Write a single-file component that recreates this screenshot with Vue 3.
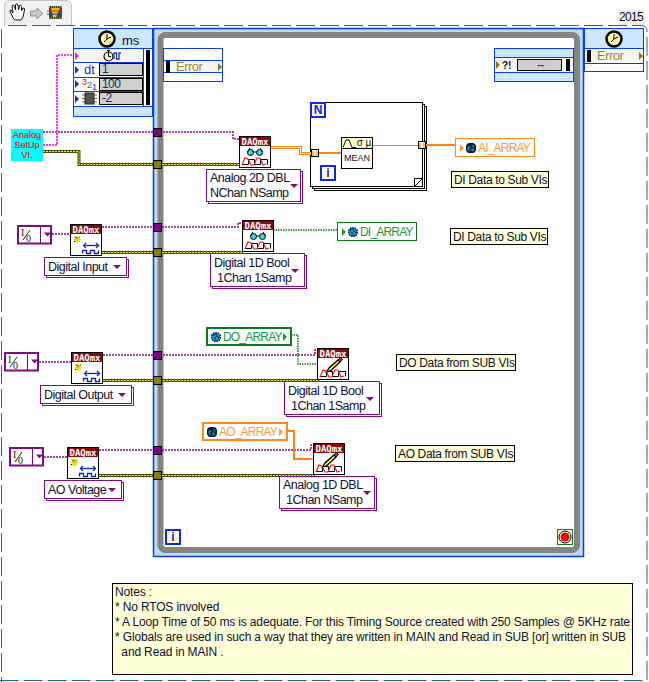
<script setup>
const wires = [
  { c: 'purple', d: 'M43 132H233V139H240' },
  { c: 'purple', d: 'M102 227H238V223H243' },
  { c: 'purple', d: 'M103 355H315V350H318' },
  { c: 'purple', d: 'M99 450H311V445H314' },
  { c: 'purple', d: 'M52 234H70' },
  { c: 'purple', d: 'M39 362H71' },
  { c: 'purple', d: 'M44 457H67' },
  { c: 'pink', d: 'M43 145H57V55H75' },
  { c: 'green', d: 'M273 230H337' },
  { c: 'green', d: 'M291 335H298V364H317' },
  { c: 'orange', d: 'M318 153H341' },
  { c: 'orange', d: 'M426 145H455' },
  { c: 'orange', d: 'M287 431H294V459H313' },
  { c: 'thin', d: 'M372 145.500H419' }
]
const errorWires = ['M43 151.500H79V164.500H240', 'M102 252.500H243', 'M103 380.500H320', 'M99 475.500H316']
const tunnels = [
  { y: 128, c: '#7a0a7a' }, { y: 160, c: '#808000' },
  { y: 223, c: '#7a0a7a' }, { y: 248, c: '#808000' },
  { y: 351, c: '#7a0a7a' }, { y: 376, c: '#808000' },
  { y: 446, c: '#7a0a7a' }, { y: 471, c: '#808000' }
]
const daq = [
  { x: 239, y: 136, kind: 'read' }, { x: 242, y: 220, kind: 'read' },
  { x: 317, y: 348, kind: 'write' }, { x: 313, y: 443, kind: 'write' },
  { x: 70, y: 224, kind: 'create' }, { x: 71, y: 352, kind: 'create' }, { x: 67, y: 447, kind: 'create' }
]
const constants = [{ x: 17, y: 225 }, { x: 4, y: 352 }, { x: 9, y: 447 }]
const selectors = [
  { x: 206, y: 169, w: 95, h: 33, lines: ['Analog 2D DBL', 'NChan NSamp'] },
  { x: 210, y: 253, w: 95, h: 34, lines: ['Digital 1D Bool', '\u00a01Chan 1Samp'] },
  { x: 284, y: 381, w: 96, h: 34, lines: ['Digital 1D Bool', '\u00a01Chan 1Samp'] },
  { x: 279, y: 476, w: 96, h: 33, lines: ['Analog 1D DBL', '\u00a01Chan NSamp'] },
  { x: 44, y: 257, w: 83, h: 19, lines: ['Digital Input'] },
  { x: 40, y: 385, w: 92, h: 19, lines: ['Digital Output'] },
  { x: 44, y: 480, w: 78, h: 19, lines: ['AO Voltage'] }
]
const globals = [
  { x: 455, y: 138, w: 80, text: 'AI_ARRAY', color: 'orange', dir: 'in' },
  { x: 337, y: 222, w: 80, text: 'DI_ARRAY', color: 'green', dir: 'in' },
  { x: 206, y: 327, w: 86, text: 'DO_ARRAY', color: 'green', dir: 'out', thick: true },
  { x: 202, y: 422, w: 86, text: 'AO_ARRAY', color: 'orange', dir: 'out', thick: true }
]
const labels = [
  { x: 451, y: 171, w: 98, text: 'DI Data to Sub VIs' },
  { x: 450, y: 228, w: 98, text: 'DI Data to Sub VIs' },
  { x: 396, y: 354, w: 120, text: 'DO Data from SUB VIs' },
  { x: 395, y: 445, w: 120, text: 'AO Data from SUB VIs' }
]
const rows = [
  { value: '1', icon: 'dt' },
  { value: '100', icon: 'count' },
  { value: '-2', icon: 'chip' }
]
const notes = [
  'Notes :',
  '* No RTOS involved',
  '* A Loop Time of 50 ms is adequate. For this Timing Source created with 250 Samples @ 5KHz rate',
  '* Globals are used in such a way that they are written in MAIN and Read in SUB [or] written in SUB',
  '\u00a0\u00a0and Read in MAIN .'
]
const at = (n) => ({ left: n.x + 'px', top: n.y + 'px', width: n.w ? n.w + 'px' : undefined, height: n.h ? n.h + 'px' : undefined })
const wave = 'M3 29L6 22L9 23L12 29L15 29L18 22L21 22L24 29L27 28'
</script>

<template>
  <div class="canvas">
    <svg class="layer" width="649" height="682" viewBox="0 0 649 682">
      <!-- tab and diagram frame -->
      <path d="M4.5 25.5V6Q4.5 .5 10 .5H65Q71.5 .5 71.5 6V25.5" fill="#f0f0f0" stroke="#c4c4d0" />
      <rect x="617" y="10" width="28" height="15" fill="#efefef" />
      <path class="frame" d="M8 25.5H641Q647 25.5 647 31V680.5H0" />
      <path class="frame" d="M1.5 29V682" />

      <!-- hand / arrow / VI icons -->
      <path d="M13 18L10 11Q10 9 12 11L13 13L12 6Q13 4 14.5 6L15.5 10L15.5 4.5Q17 3 18 5L18.5 10L19.5 5.500Q21 4.500 21.500 6.500L21.500 11L23 8Q25 8 24.500 10L23 17L21 20H15Z" fill="#fff" stroke="#111" stroke-width="1" />
      <path d="M30.500 11H37V8L43 13.500L37 19V16H30.500Z" fill="#c8c8c8" stroke="#909090" />
      <rect x="49" y="6" width="13" height="13" fill="#444" />
      <path d="M49 7h13M49 18h13" stroke="#bbb" stroke-dasharray="1 1" />
      <path d="M51 8H60L56 17H53Z" fill="#e8c800" />
      <path d="M47 11H62" stroke="#e02020" />
      <path d="M47 14H62" stroke="#2040e0" />

      <!-- while loop -->
      <rect x="153.500" y="28.500" width="430" height="528" fill="#bcdcf4" stroke="#0a3ce8" stroke-width="1.500" />
      <rect x="160.500" y="35" width="416.500" height="515" rx="5" fill="#fff" stroke="#848484" stroke-width="6" />

      <!-- for loop -->
      <rect x="314.500" y="106.500" width="112" height="84" fill="#fff" stroke="#000" />
      <rect x="312.500" y="104.500" width="112" height="84" fill="#fff" stroke="#000" />
      <rect x="310.500" y="102.500" width="112" height="84" fill="#fff" stroke="#000" />
      <path d="M414.500 186.500L422.500 178.500H414.500Z" fill="#fff" stroke="#000" />

      <!-- wires -->
      <path v-for="(w, i) in errorWires" :key="'eb' + i" class="err-base" :d="w" />
      <path v-for="(w, i) in errorWires" :key="'et' + i" class="err-top" :d="w" />
      <path v-for="w in wires" :key="w.d" :class="w.c" :d="w.d" />
      <path class="double-o" d="M271 147.500H300.500V153.500H311" />
      <path class="double-i" d="M271 147.500H300.500V153.500H311" />

      <!-- loop tunnels -->
      <rect v-for="t in tunnels" :key="t.y" x="153.500" :y="t.y + 0.5" width="8" height="8" :fill="t.c" stroke="#000" />
      <g class="tunnel">
        <rect x="311.500" y="149.500" width="7" height="7" />
        <path d="M313.500 151.500h-.5v4h.5M316.500 151.500h.5v4h-.5" />
        <rect x="418.500" y="141.500" width="7" height="7" />
        <path d="M420.500 143.500h-.5v4h.5M423.500 143.500h.5v4h-.5" />
      </g>

      <!-- stop terminal -->
      <rect x="557.500" y="529.500" width="15" height="15" fill="#ffffd8" stroke="#0a7a1a" />
      <circle cx="565" cy="537" r="6" fill="#fff" stroke="#000" />
      <circle cx="565" cy="537" r="4.500" fill="#f00000" />

      <!-- DAQmx nodes -->
      <g v-for="n in daq" :key="n.x + '-' + n.y" :transform="`translate(${n.x} ${n.y})`">
        <rect x=".5" y=".5" width="31" height="31" fill="#fff" stroke="#000" />
        <rect x="1" y="1" width="30" height="9" fill="#8c0a0a" />
        <text class="daq-title" x="16" y="8.500" text-anchor="middle" textLength="27">DAQmx</text>
        <g v-if="n.kind === 'read'">
          <circle cx="11.500" cy="16.500" r="3" fill="#40d0e0" stroke="#000" />
          <circle cx="20.500" cy="16.500" r="3" fill="#40d0e0" stroke="#000" />
          <path d="M14 16h4M8.500 16L11 12M23.500 16L21 12" fill="none" stroke="#000" />
        </g>
        <g v-if="n.kind === 'write'">
          <path d="M12 20L9.500 24L14 22.500L23 14L21 12Z" fill="#f4e870" stroke="#000" stroke-width="1.300" />
          <path d="M21 12L23 14L25.500 11.500L23.500 9.500Z" fill="#e02020" stroke="#000" />
        </g>
        <g v-if="n.kind !== 'create'">
          <path d="M3 28.500H9.500V23.500H15.500V28.500H21.500V23.500H28.500V28.500" fill="none" stroke="#000" />
          <path :d="wave" fill="none" stroke="#e81010" stroke-width="1.100" />
        </g>
        <g v-else>
          <path d="M4 15.500H11M7.500 12V19M5 13L10 18M10 13L5 18" stroke="#e8d800" stroke-width="1.500" />
          <path d="M5 12.500L7 14.500M10 12.500L9 13.500M4 18L5 17" stroke="#000" />
          <path d="M14 21.500H28" stroke="#0a2aa8" stroke-width="1.300" />
          <path d="M16 19L13.500 21.500L16 24M26 19L28.500 21.500L26 24" fill="none" stroke="#0a2aa8" stroke-width="1.300" />
          <path d="M12.500 29.500V26.500H16.500V29.500H20.500V26.500H24.500V29.500H28.500V26.500" fill="none" stroke="#0a2aa8" stroke-width="1.300" />
        </g>
      </g>

      <!-- ring constants -->
      <g v-for="c in constants" :key="c.x" :transform="`translate(${c.x} ${c.y})`">
        <rect x="1" y="1" width="33" height="17.500" fill="#fff" stroke="#800a80" stroke-width="2" />
        <path d="M23.500 1V18" stroke="#800a80" />
        <path d="M27 7.500H34L30.500 11.500Z" fill="#800a80" />
        <path d="M6 15L13 5" stroke="#222" />
        <text class="io" x="4" y="11">I</text>
        <text class="io" x="9" y="17">0</text>
      </g>

      <!-- chevrons -->
      <g class="chev">
        <path d="M109 109.500L113.500 113L118 109.500M109 112.500L113.500 116L118 112.500" />
        <path d="M189 73.500L193.500 77L198 73.500M189 76.500L193.500 80L198 76.500" />
        <path d="M530 73.500L534.500 77L539 73.500M530 76.500L534.500 80L539 76.500" />
        <path d="M610 63.500L614.500 67L619 63.500M610 66.500L614.500 70L619 66.500" />
      </g>
    </svg>

    <div class="tag year">2015</div>

    <!-- timed loop left node -->
    <div class="timed">
      <div class="timed-head">
        <svg width="18" height="18" viewBox="0 0 18 18"><circle cx="9" cy="9" r="7.500" fill="#fff3b0" stroke="#000" stroke-width="2.500" /><path d="M9 4V9L6 12M13 7L9 9" stroke="#000" fill="none" /></svg>
        <span class="ms">ms</span>
      </div>
      <div class="timed-body">
        <div class="timed-rows">
          <div class="row row-top">
            <i class="tri magenta"></i>
            <svg class="watch" width="18" height="12" viewBox="0 0 18 12"><circle cx="5.500" cy="6.500" r="4.500" fill="#fff3b0" stroke="#000" stroke-width="1.200" /><path d="M4 .5H7M5.500 1V6.500H8" fill="none" stroke="#000" /><path d="M11 9V3H13.500V9H16V3H18" fill="none" stroke="#1a3ab0" stroke-width="1.300" /></svg>
          </div>
          <div v-for="r in rows" :key="r.icon" class="row">
            <i class="tri blue"></i>
            <span class="row-icon">
              <span v-if="r.icon === 'dt'" class="dt">dt</span>
              <span v-if="r.icon === 'count'" class="count"><b class="c3">3</b><b class="c2">2</b><b class="c1">1</b></span>
              <svg v-if="r.icon === 'chip'" width="15" height="13" viewBox="0 0 15 13"><path d="M0 3H15M0 6.500H15M0 10H15" stroke="#807020" /><rect x="3" y="1" width="9" height="11" fill="#555" stroke="#222" /></svg>
            </span>
            <span class="num">{{ r.value }}</span>
          </div>
        </div>
        <div class="rail"><i class="bar"></i></div>
      </div>
      <div class="timed-foot"></div>
    </div>

    <!-- left error node -->
    <div class="err-node left-err">
      <div class="band white"></div>
      <div class="err-row">
        <i class="bar short"></i>
        <span class="err-text">Error</span>
        <i class="tri olive"></i>
      </div>
      <div class="band white last"></div>
    </div>

    <!-- right inner node -->
    <div class="err-node right-err">
      <div class="band"></div>
      <div class="err-row">
        <i class="tri olive"></i>
        <span class="bang">?!</span>
        <span class="num dash">--</span>
        <i class="bar short"></i>
      </div>
      <div class="band last"></div>
    </div>

    <!-- far right node -->
    <div class="end-node">
      <div class="end-head">
        <svg width="18" height="18" viewBox="0 0 18 18"><circle cx="9" cy="9" r="7.500" fill="#fff3b0" stroke="#000" stroke-width="2.500" /><path d="M9 4V9L6 12M13 7L9 9" stroke="#000" fill="none" /></svg>
      </div>
      <div class="err-row end-row">
        <i class="bar short"></i>
        <span class="err-text">Error</span>
        <i class="tri olive"></i>
      </div>
      <div class="end-foot"></div>
    </div>

    <div class="setup"><span>Analog</span><span>SetUp</span><span>VI.</span></div>

    <div class="iter iter-n">N</div>
    <div class="iter iter-i">i</div>
    <div class="iter iter-w">i</div>

    <div class="mean">
      <div class="mean-top">
        <svg width="13" height="9" viewBox="0 0 13 9"><path d="M0 8.500L3 1L6 1L9 8.500H13" fill="none" stroke="#000" /></svg>
        <span>σ µ</span>
      </div>
      <div class="mean-bottom">MEAN</div>
    </div>

    <div v-for="s in selectors" :key="s.x" class="selector" :style="at(s)">
      <div class="sel-lines"><div v-for="l in s.lines" :key="l">{{ l }}</div></div>
      <i class="tri purple"></i>
    </div>

    <div v-for="g in globals" :key="g.text" class="global" :class="[g.color, { thick: g.thick, out: g.dir === 'out' }]" :style="at(g)">
      <i v-if="g.dir === 'in'" class="g-tri"></i>
      <svg width="10" height="10" viewBox="0 0 10 10"><circle cx="5" cy="5" r="4.500" fill="#08a0d8" stroke="#102030" /><path d="M2 3L5 2L6 4L4 6L5 9M7 5L9 6" fill="none" stroke="#102030" /></svg>
      <span>{{ g.text }}</span>
      <i v-if="g.dir === 'out'" class="g-tri"></i>
    </div>

    <div v-for="l in labels" :key="l.x" class="tag note-label" :style="at(l)">{{ l.text }}</div>

    <div class="notes"><div v-for="n in notes" :key="n">{{ n }}</div></div>
  </div>
</template>

<style>
html, body { margin: 0; background: #fff; }
</style>

<style scoped>
.canvas { position: relative; width: 649px; height: 682px; overflow: hidden; background: #fff; font-family: "Liberation Sans", Arial, sans-serif; font-size: 12px; color: #101030; }
.layer { position: absolute; left: 0; top: 0; }
.frame { fill: none; stroke: #1668a8; stroke-width: 1; stroke-dasharray: 19 5; }
.purple { fill: none; stroke: #800a80; stroke-width: 1.500; stroke-dasharray: 2 1; }
.pink { fill: none; stroke: #ff30ff; stroke-width: 2; stroke-dasharray: 2 1; }
.green { fill: none; stroke: #0a7a1a; stroke-width: 1.500; stroke-dasharray: 1.500 1; }
.orange { fill: none; stroke: #ff7f10; stroke-width: 2; }
.thin { fill: none; stroke: #e88a30; stroke-width: 1; }
.double-o { fill: none; stroke: #ff7f10; stroke-width: 3; }
.double-i { fill: none; stroke: #fff; stroke-width: 1; }
.err-base { fill: none; stroke: #4a4a00; stroke-width: 3; }
.err-top { fill: none; stroke: #f4f020; stroke-width: 1; stroke-dasharray: 2 1; }
.tunnel rect { fill: #ffffcc; stroke: #000; }
.tunnel path { fill: none; stroke: #e07000; }
.chev path { fill: none; stroke: #b0b0b0; }
.daq-title { font-family: "DejaVu Sans Mono", monospace; font-size: 9px; font-weight: 700; fill: #fff; }
.io { font-family: "Liberation Serif", serif; font-size: 10px; fill: #222; }

.tag { position: absolute; white-space: nowrap; }
.year { left: 619px; top: 10px; font-size: 12px; letter-spacing: -0.7px; line-height: 14px; color: #111; }

.timed { position: absolute; left: 73px; top: 28px; width: 80px; height: 89px; box-sizing: border-box; border: 1px solid #0a3ce8; background: #cce6fb; display: flex; flex-direction: column; }
.timed-head { height: 19px; display: flex; align-items: center; justify-content: flex-start; padding-left: 24px; gap: 6px; }
.ms { font-size: 13px; margin-top: 3px; }
.timed-body { display: flex; height: 59px; border-top: 1px solid #0a3ce8; border-bottom: 1px solid #0a3ce8; box-sizing: border-box; }
.timed-rows { width: 69px; display: flex; flex-direction: column; }
.row { height: 15px; box-sizing: border-box; border-bottom: 1px solid #0a3ce8; background: #fff; display: flex; align-items: center; padding-left: 1px; position: relative; }
.row:last-child { border-bottom: 0; }
.row-top { background: #f6f6f6; justify-content: center; }
.row-top .tri { position: absolute; left: 1px; top: 3px; }
.watch { margin-left: 6px; }
.row-icon { width: 19px; display: flex; justify-content: center; margin-left: 1px; }
.dt { color: #0a30d0; font-size: 13px; line-height: 13px; }
.count { display: flex; font-size: 9px; line-height: 9px; height: 13px; }
.count b { font-weight: 400; }
.c3 { color: #e01010; }
.c2 { color: #108030; margin-top: 3px; }
.c1 { color: #1030d0; margin-top: 5px; }
.num { flex: 1; height: 13px; box-sizing: border-box; border: 1px solid #000; background: #cfcfcf; font-size: 12px; letter-spacing: -0.6px; line-height: 11px; padding-left: 2px; color: #203050; }
.rail { flex: 1; border-left: 1px solid #0a3ce8; background: #fff; display: flex; justify-content: center; padding-top: 1px; }
.bar { display: block; width: 4px; height: 55px; background: #000; }
.bar.short { height: 12px; flex: none; }

.tri { display: block; width: 0; height: 0; flex: none; }
.tri.magenta { border-left: 4px solid #f020f0; border-top: 4px solid transparent; border-bottom: 4px solid transparent; }
.tri.blue { border-left: 4px solid #0a30d0; border-top: 4px solid transparent; border-bottom: 4px solid transparent; }
.tri.olive { border-left: 4px solid #8a7a10; border-top: 4px solid transparent; border-bottom: 4px solid transparent; }
.tri.purple { border-top: 4px solid #800a80; border-left: 4px solid transparent; border-right: 4px solid transparent; }

.err-node { position: absolute; top: 48px; height: 34px; width: 80px; box-sizing: border-box; border: 1px solid #0a3ce8; display: flex; flex-direction: column; }
.left-err { left: 163px; width: 60px; }
.right-err { left: 494px; }
.left-err .band { flex: none; height: 11px; }
.right-err .band { flex: none; height: 8px; }
.band { background: #cce6fb; }
.band.last { flex: 1; height: auto; }
.band.white { background: #fff; }
.err-row { height: 13px; flex: none; box-sizing: border-box; background: #f6f6f6; border-top: 1px solid #0a3ce8; border-bottom: 1px solid #0a3ce8; display: flex; align-items: center; padding: 0 0 0 2px; }
.left-err .err-row { height: 13px; }
.right-err .err-row { height: 16px; padding: 0 3px 0 1px; }
.err-text { flex: 1; color: #a08a20; font-size: 13px; letter-spacing: -0.5px; line-height: 12px; padding-left: 6px; }
.right-err .num { flex: none; width: 45px; height: 12px; margin: 0 4px 0 9px; text-align: center; line-height: 10px; }
.bang { font-size: 10px; font-weight: 700; color: #111; margin-left: 2px; width: 6px; }

.end-node { position: absolute; left: 584px; top: 28px; width: 60px; height: 44px; box-sizing: border-box; border: 1px solid #0a3ce8; background: #fff; display: flex; flex-direction: column; }
.end-head { height: 19px; background: #cce6fb; display: flex; align-items: center; justify-content: center; flex: none; }
.end-row { height: 16px; }
.end-foot { flex: 1; }

.setup { position: absolute; left: 11px; top: 129px; width: 32px; height: 32px; background: #00ffff; color: #f80808; font-size: 9px; line-height: 10px; display: flex; flex-direction: column; align-items: center; padding-top: 1px; box-sizing: border-box; -webkit-text-stroke: 0.2px #f80808; }

.iter { position: absolute; box-sizing: border-box; width: 16px; height: 16px; border: 2px solid #0a2ae8; background: #ffffd0; color: #0a2ae8; font-size: 12px; font-weight: 700; line-height: 12px; text-align: center; }
.iter-n { left: 310px; top: 102px; }
.iter-i { left: 320px; top: 165px; }
.iter-w { left: 165px; top: 529px; }

.mean { position: absolute; left: 341px; top: 137px; width: 32px; height: 32px; box-sizing: border-box; border: 1px solid #000; background: #fff; display: flex; flex-direction: column; }
.mean-top { height: 11px; background: #ffffcc; border-bottom: 1px solid #000; display: flex; align-items: center; justify-content: center; gap: 1px; font-size: 10px; line-height: 10px; }
.mean-bottom { flex: 1; font-size: 9px; text-align: center; line-height: 19px; color: #111; }

.selector { position: absolute; box-sizing: border-box; border: 1px solid #800a80; background: #fff; box-shadow: 2px 2px 0 -1px #fff, 2px 2px 0 0 #800a80; display: flex; align-items: center; padding: 1px 3px 0 3px; }
.sel-lines { flex: 1; line-height: 15px; font-size: 12.500px; letter-spacing: -0.5px; white-space: nowrap; }
.selector .tri { margin-right: 2px; }

.global { position: absolute; height: 19px; box-sizing: border-box; display: flex; align-items: center; gap: 1px; padding: 0 3px 0 4px; border: 1px solid; font-size: 12px; letter-spacing: -0.8px; white-space: nowrap; }
.global svg { flex: none; margin-right: 1px; }
.global.thick { border-width: 2px; }
.global.orange { border-color: #ff8a20; color: #ff9a40; }
.global.green { border-color: #0a7a1a; color: #18983a; }
.g-tri { display: block; flex: none; width: 0; height: 0; border-left: 4px solid; border-top: 4px solid transparent; border-bottom: 4px solid transparent; margin-right: 1px; }
.global.out { padding-left: 3px; }
.global.out .g-tri { margin: 0 0 0 auto; }

.note-label { box-sizing: border-box; height: 17px; border: 1px solid #000; background: #ffffd8; padding: 0 2px; font-size: 12px; letter-spacing: -0.35px; line-height: 16px; color: #101030; }

.notes { position: absolute; left: 112px; top: 583px; width: 521px; height: 92px; box-sizing: border-box; border: 1px solid #000; background: #ffffd8; padding: 1px 0 0 2px; font-size: 12px; letter-spacing: -0.15px; line-height: 15px; white-space: nowrap; color: #101030; }
</style>
